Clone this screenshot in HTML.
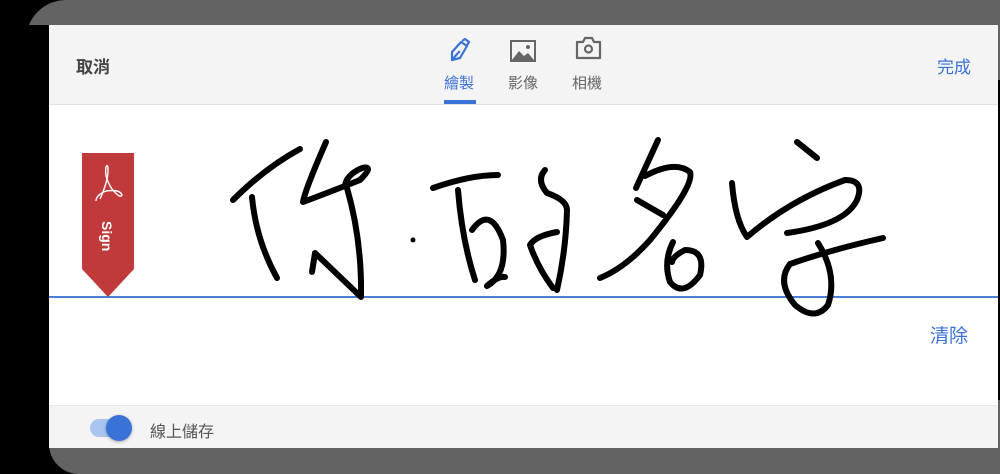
<!DOCTYPE html>
<html><head><meta charset="utf-8"><style>
*{margin:0;padding:0;box-sizing:border-box}
body{width:1000px;height:474px;background:#000;position:relative;overflow:hidden;font-family:"Liberation Sans","Noto Sans CJK TC",sans-serif}
.frame{position:absolute;left:26px;top:0;width:1000px;height:80px;background:#636363;border-radius:40px 0 0 0}
.fbot{position:absolute;left:49px;top:400px;width:960px;height:74px;background:#636363;border-radius:0 0 0 30px}
.panel{position:absolute;left:49px;top:25px;width:949px;height:423px;background:#fff}
.hdr{position:absolute;left:0;top:0;width:100%;height:80px;background:#f4f4f4;border-bottom:1px solid #e2e2e2}
.ftr{position:absolute;left:0;top:380px;width:100%;height:43px;background:#f4f4f4;border-top:1px solid #e8e8e8}
.t{position:absolute;font-size:16px;white-space:nowrap}
</style></head><body>
<div class="frame"></div>
<div style="position:absolute;left:0;top:25px;width:49px;height:449px;background:#000"></div>
<div class="fbot"></div>
<div class="panel">
 <div class="hdr">
  <div class="t" style="left:27px;top:28px;color:#444;font-weight:bold;font-size:17px">取消</div>
  <div class="t" style="left:888px;top:28px;color:#3a73d8;font-size:17px">完成</div>
  <div class="t" style="left:395px;top:47px;font-size:15px;color:#3a73d8">繪製</div>
  <div class="t" style="left:459px;top:47px;font-size:15px;color:#666">影像</div>
  <div class="t" style="left:523px;top:47px;font-size:15px;color:#666">相機</div>
  <div style="position:absolute;left:395px;top:75px;width:32px;height:4px;background:#3a73d8"></div>
  <svg style="position:absolute;left:398px;top:13px" width="26" height="26" viewBox="0 0 26 26" fill="none" stroke="#3a73d8" stroke-width="2.2" stroke-linejoin="round"><path d="M14 4 L20 8 L13 20 L5 22 L5 14 Z"/><path d="M15 3 L18 1 L22 4 L20 7"/><path d="M5 22 L11 15"/><circle cx="12" cy="14" r="1.3" fill="#3a73d8" stroke="none"/></svg>
  <svg style="position:absolute;left:461px;top:15px" width="26" height="22" viewBox="0 0 26 22"><rect x="1" y="1" width="24" height="20" fill="none" stroke="#666" stroke-width="2"/><path d="M2 20 L9 11 L14 16 L18 13 L24 20Z" fill="#666"/><circle cx="18" cy="7" r="2" fill="#666"/></svg>
  <svg style="position:absolute;left:526px;top:11px" width="27" height="24" viewBox="0 0 27 24" fill="none" stroke="#666" stroke-width="2.2"><path d="M2 6 H8 L10 2 H17 L19 6 H25 V22 H2 Z" stroke-linejoin="round"/><circle cx="13.5" cy="13" r="3.5"/></svg>
 </div>
 <div style="position:absolute;left:0;top:271px;width:100%;height:1.5px;background:#4a7fd6"></div>
 <div class="t" style="left:881px;top:296px;color:#3a73d8;font-size:19px">清除</div>
 <svg style="position:absolute;left:33px;top:128px" width="52" height="144" viewBox="0 0 52 144"><path d="M0 0 H52 V116 L26 144 L0 116 Z" fill="#c0393b"/><path d="M18 46 Q26 28 26 18 Q26 10 24 14 Q22 24 30 36 Q38 46 40 42 Q38 36 24 38 Q14 42 14 48" fill="none" stroke="#fff" stroke-width="1.4"/><text x="0" y="0" transform="translate(20,68) rotate(90)" fill="#fff" font-size="14" font-weight="bold" font-family="Liberation Sans,sans-serif">Sign</text></svg>
 <div class="ftr">
  <div style="position:absolute;left:41px;top:13px;width:42px;height:18px;border-radius:9px;background:#a9c4ef"></div>
  <div style="position:absolute;left:57px;top:9px;width:26px;height:26px;border-radius:13px;background:#3a73d8;box-shadow:0 1px 3px rgba(0,0,0,.3)"></div>
  <div class="t" style="left:101px;top:12px;color:#555">線上儲存</div>
 </div>
</div>
<svg style="position:absolute;left:0;top:0" width="1000" height="474" fill="none" stroke="#000" stroke-width="6" stroke-linecap="round" stroke-linejoin="round">
<path d="M233 200 Q265 168 300 149"/>
<path d="M252 197 Q256 240 277 278"/>
<path d="M326 142 Q305 190 303 202 Q335 190 360 180 Q375 165 362 168 Q346 175 345 186"/>
<path d="M347 188 Q362 240 361 297 L315 253 L312 272"/>
<circle cx="413" cy="240" r="2.5" fill="#000" stroke="none"/>
<path d="M433 188 Q470 175 498 175"/>
<path d="M458 190 Q462 240 475 280"/>
<path d="M472 230 Q490 205 503 240 Q507 275 487 286 Q498 276 505 277"/>
<path d="M545 170 Q536 180 547 193 Q567 200 567 210 Q566 250 557 290"/>
<path d="M557 232 Q535 236 530 245 Q538 268 553 288"/>
<path d="M658 140 L636 188 M645 176 Q675 160 690 172 Q695 185 650 240 Q625 268 600 278"/>
<path d="M637 200 L663 215"/>
<path d="M673 242 Q663 262 670 282 Q683 298 700 275 Q706 250 685 250 Q673 256 672 262"/>
<path d="M797 142 L817 158"/>
<path d="M732 183 Q735 220 747 237 Q790 200 845 180 Q865 180 857 200 Q845 225 787 233"/>
<path d="M818 243 Q838 275 828 305 Q815 322 795 305 Q776 282 790 264 Q830 250 883 238"/>
</svg>
</body></html>
